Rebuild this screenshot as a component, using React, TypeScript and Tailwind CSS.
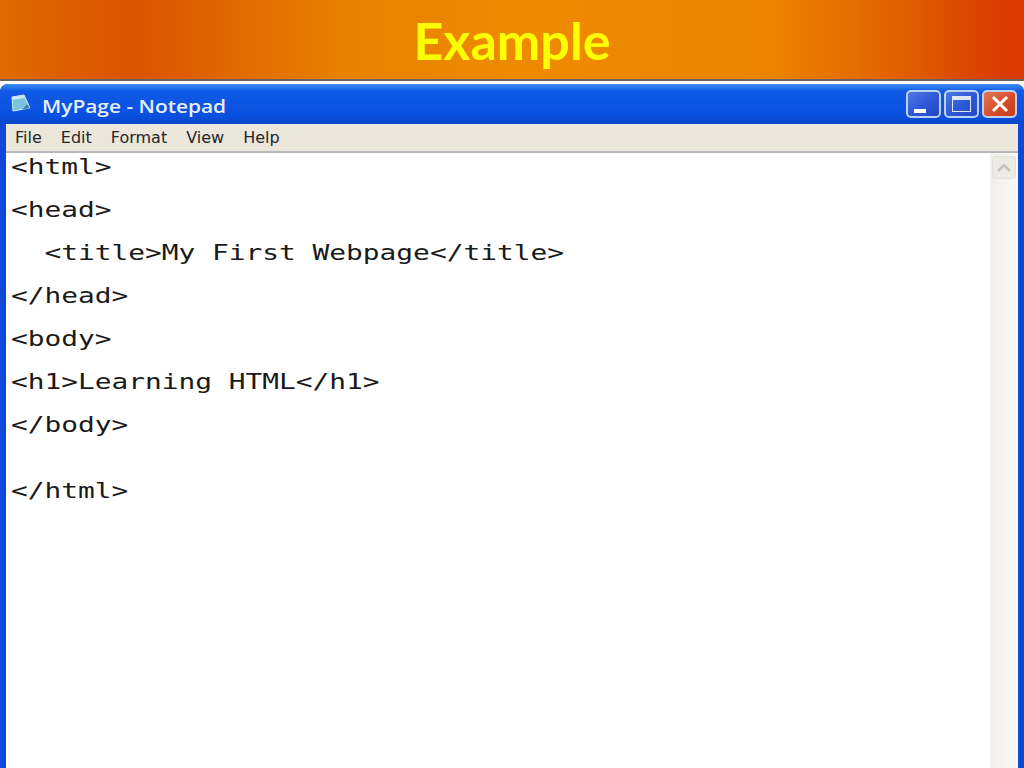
const lines: { text: string; className: string }[] = [
  { text: "<html>", className: "h-[43px]" },
  { text: "<head>", className: "h-[43px]" },
  { text: "  <title>My First Webpage</title>", className: "h-[43px]" },
  { text: "</head>", className: "h-[43px]" },
  { text: "<body>", className: "h-[43px]" },
  { text: "<h1>Learning HTML</h1>", className: "h-[43px]" },
  { text: "</body>", className: "h-[66px]" },
  { text: "</html>", className: "h-[43px]" },
];

const menus = ["File", "Edit", "Format", "View", "Help"];

function NotepadIcon() {
  return (
    <svg width="22" height="20" viewBox="0 0 22 20">
      <path d="M2 3 L14 1 L20 14 L3 17 Z" fill="#7cc4de" stroke="#d4eef8" strokeWidth="1" />
      <path d="M2 3 L14 1 L15 4 L2 6 Z" fill="#c8e8f4" />
      <path d="M12 16 L20 14 L17 10 Z" fill="#3f86bd" />
    </svg>
  );
}

function WinButton({ kind }: { kind: "min" | "max" | "close" }) {
  const bg =
    kind === "close"
      ? "bg-gradient-to-br from-[#e2775a] via-[#d9512b] to-[#c23a16]"
      : "bg-gradient-to-br from-[#4f76e4] via-[#2f5bd8] to-[#2444c4]";
  return (
    <div className={`flex h-[28px] w-[35px] items-center justify-center rounded-[5px] border-2 border-[#bcd0f0] ${bg}`}>
      {kind === "min" && <div className="mt-[14px] mr-[7px] h-[4px] w-[12px] bg-white" />}
      {kind === "max" && (
        <div className="h-[16px] w-[19px] border border-t-[4px] border-[#dfe8fb]" />
      )}
      {kind === "close" && (
        <svg width="20" height="18" viewBox="0 0 20 18">
          <path d="M3 2 L17 16 M17 2 L3 16" stroke="#fff" strokeWidth="3" />
        </svg>
      )}
    </div>
  );
}

export default function App() {
  return (
    <div className="flex h-[768px] w-[1024px] flex-col overflow-hidden bg-white">
      {/* slide heading */}
      <div className="flex h-[81px] shrink-0 items-center justify-center border-b-2 border-[#6b6259] bg-[linear-gradient(90deg,#e06a00_0%,#d95300_13%,#e88000_33%,#ee8a00_50%,#ec8400_75%,#e06000_88%,#d83a00_98%)]">
        <h1 className="font-['Lato',sans-serif] text-[52px] font-bold text-[#ffff00]">Example</h1>
      </div>

      {/* notepad window */}
      <div className="mt-[3px] flex min-h-0 flex-1 flex-col rounded-t-[8px] bg-[#0f48d8] px-[6px]">
        <div className="-mx-[6px] flex h-[40px] shrink-0 items-center justify-between rounded-t-[8px] bg-[linear-gradient(180deg,#3f8cf3_0%,#0f5ae6_18%,#0a50e0_80%,#0a46c8_100%)] pr-[7px] pl-[10px]">
          <div className="flex items-center gap-[10px] font-['Open_Sans',sans-serif] text-[18px] font-semibold text-white">
            <NotepadIcon />
            <span className="mt-[5px] origin-left scale-x-[1.16] text-[#e6eefc]">MyPage - Notepad</span>
          </div>
          <div className="flex gap-[3px]">
            <WinButton kind="min" />
            <WinButton kind="max" />
            <WinButton kind="close" />
          </div>
        </div>

        <div className="flex h-[29px] shrink-0 items-center gap-[19px] border-b-2 border-[#b4b8ba] bg-[#ebe8db] pl-[9px] font-['DejaVu_Sans',sans-serif] text-[16px] text-[#26262a]">
          {menus.map((m) => (
            <span key={m}>{m}</span>
          ))}
        </div>

        <div className="flex min-h-0 flex-1 bg-white">
          <div className="min-w-0 flex-1 pt-[2px] pl-[5px] font-['DejaVu_Sans_Mono',monospace] text-[22px] text-[#1a1a1a]">
            {lines.map((l, i) => (
              <div key={i} className={`${l.className} origin-left scale-x-[1.265] whitespace-pre leading-[24px]`}>
                {l.text}
              </div>
            ))}
          </div>
          <div className="flex w-[28px] shrink-0 justify-center bg-[linear-gradient(90deg,#f1f0e8,#faf9f4)] pt-[3px]">
            <div className="flex h-[23px] w-[24px] items-center justify-center rounded-[3px] border border-[#e2e2dc] bg-[#ecebe4]">
              <svg width="14" height="9" viewBox="0 0 14 9">
                <path d="M1 8 L7 2 L13 8" fill="none" stroke="#c4c4bc" strokeWidth="2.5" />
              </svg>
            </div>
          </div>
        </div>
      </div>
    </div>
  );
}
